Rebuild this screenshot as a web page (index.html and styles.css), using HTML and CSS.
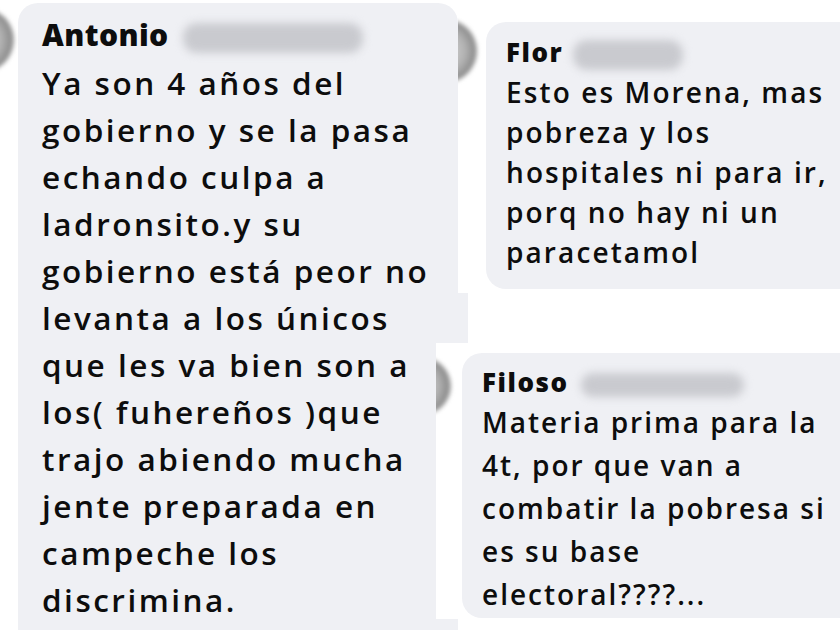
FILE: index.html
```html
<!DOCTYPE html>
<html lang="es">
<head>
  <meta charset="UTF-8" />
  <meta name="viewport" content="width=device-width, initial-scale=1.0" />
  <title>Comentarios</title>
  <link rel="stylesheet" href="styles.css">
</head>
<body>

<main class="board">

  <!-- left screenshot: Antonio -->
  <section class="shot shot-left">
    <div class="avatar avatar-left"></div>
    <div class="bubble bubble-left">
      <p class="name">Antonio <span class="blur blur-left"></span></p>
      <p class="text">Ya son 4 años del<br>gobierno y se la pasa<br>echando culpa a<br>ladronsito.y su<br>gobierno está peor no<br>levanta a los únicos<br>que les va bien son a<br>los( fuhereños )que<br>trajo abiendo mucha<br>jente preparada en<br>campeche los<br>discrimina.</p>
    </div>
  </section>

  <section class="col-right">
    <!-- Flor -->
    <div class="shot shot-flor">
      <div class="avatar avatar-flor"></div>
      <div class="bubble bubble-flor">
        <p class="name">Flor <span class="blur blur-flor"></span></p>
        <p class="text">Esto es Morena, mas<br>pobreza y los<br>hospitales ni para ir,<br>porq no hay ni un<br>paracetamol</p>
      </div>
    </div>

    <div class="gap-row"><div class="sliver"></div></div>

    <!-- Filoso -->
    <div class="shot shot-filoso">
      <div class="avatar avatar-filoso"></div>
      <div class="bubble bubble-filoso">
        <p class="name">Filoso <span class="blur blur-filoso"></span></p>
        <p class="text">Materia prima para la<br>4t, por que van a<br>combatir la pobresa si<br>es su base<br>electoral????...</p>
      </div>
    </div>
  </section>

</main>

</body>
</html>
```

FILE: styles.css
```css
:root {
  --bubble: #eff0f4;
  --ink: #0d0d0d;
  --blur: #c9cacf;
}

* {
  margin: 0;
  padding: 0;
  box-sizing: border-box;
}

body {
  background: #ffffff;
  color: var(--ink);
  font-family: 'Open Sans', 'Noto Sans', sans-serif;
  width: 840px;
  height: 630px;
  overflow: hidden;
}

.board {
  display: flex;
  width: 840px;
  height: 630px;
}

.shot {
  display: flex;
  overflow: hidden;
}

.avatar {
  flex-shrink: 0;
  border-radius: 50%;
  background: radial-gradient(circle at 45% 50%, #d6d6d6 0%, #b4b4b4 45%, #8e8e8e 68%, #c8c8c8 88%, rgba(255,255,255,0) 100%);
  filter: blur(2px);
}

.bubble {
  background: var(--bubble);
  border-radius: 20px;
}

.name {
  font-weight: 800;
  white-space: nowrap;
}

.text {
  font-weight: 550;
  white-space: nowrap;
}

.blur {
  display: inline-block;
  background: var(--blur);
  border-radius: 14px;
  filter: blur(4px);
  vertical-align: middle;
  letter-spacing: 0;
}

/* left */
.shot-left {
  width: 458px;
  flex-shrink: 0;
}

.avatar-left {
  width: 64px;
  height: 64px;
  margin: 8px 4px 0 -50px;
}

.bubble-left {
  flex: 1;
  margin-top: 3px;
  height: 660px;
  padding: 8px 0 0 24px;
}

.bubble-left .name {
  font-size: 30px;
  line-height: 48px;
  letter-spacing: 0.4px;
}

.bubble-left .text {
  font-size: 31.5px;
  line-height: 47px;
  letter-spacing: 2.5px;
}

.blur-left {
  width: 180px;
  height: 30px;
  margin-left: 6px;
}

/* right column */
.col-right {
  width: 382px;
  flex-shrink: 0;
  display: flex;
  flex-direction: column;
}

.shot-flor {
  height: 293px;
  background: #ffffff;
}

.avatar-flor {
  width: 60px;
  height: 62px;
  margin: 20px 9px 0 -41px;
}

.bubble-flor {
  flex: 1;
  margin: 22px -30px 0 0;
  height: 267px;
  padding: 10px 0 0 20px;
}

.bubble-flor .name,
.bubble-filoso .name {
  font-size: 26px;
  line-height: 40px;
  letter-spacing: 1.5px;
}

.bubble-flor .text {
  font-size: 28px;
  line-height: 40px;
  letter-spacing: 2.1px;
}

.blur-flor {
  width: 110px;
  height: 30px;
  margin-left: 2px;
}

.gap-row {
  height: 50px;
}

.sliver {
  width: 10px;
  height: 50px;
  background: var(--bubble);
}

.shot-filoso {
  height: 276px;
  margin-left: -22px;
  background: #ffffff;
}

.avatar-filoso {
  width: 60px;
  height: 58px;
  margin: 14px 11px 0 -45px;
}

.bubble-filoso {
  flex: 1;
  margin: 10px -30px 0 0;
  height: 265px;
  padding: 11px 0 0 20px;
}

.bubble-filoso .name {
  line-height: 37px;
}

.bubble-filoso .text {
  font-size: 28px;
  line-height: 43px;
  letter-spacing: 2px;
}

.blur-filoso {
  width: 163px;
  height: 24px;
  margin-left: 4px;
}
```
